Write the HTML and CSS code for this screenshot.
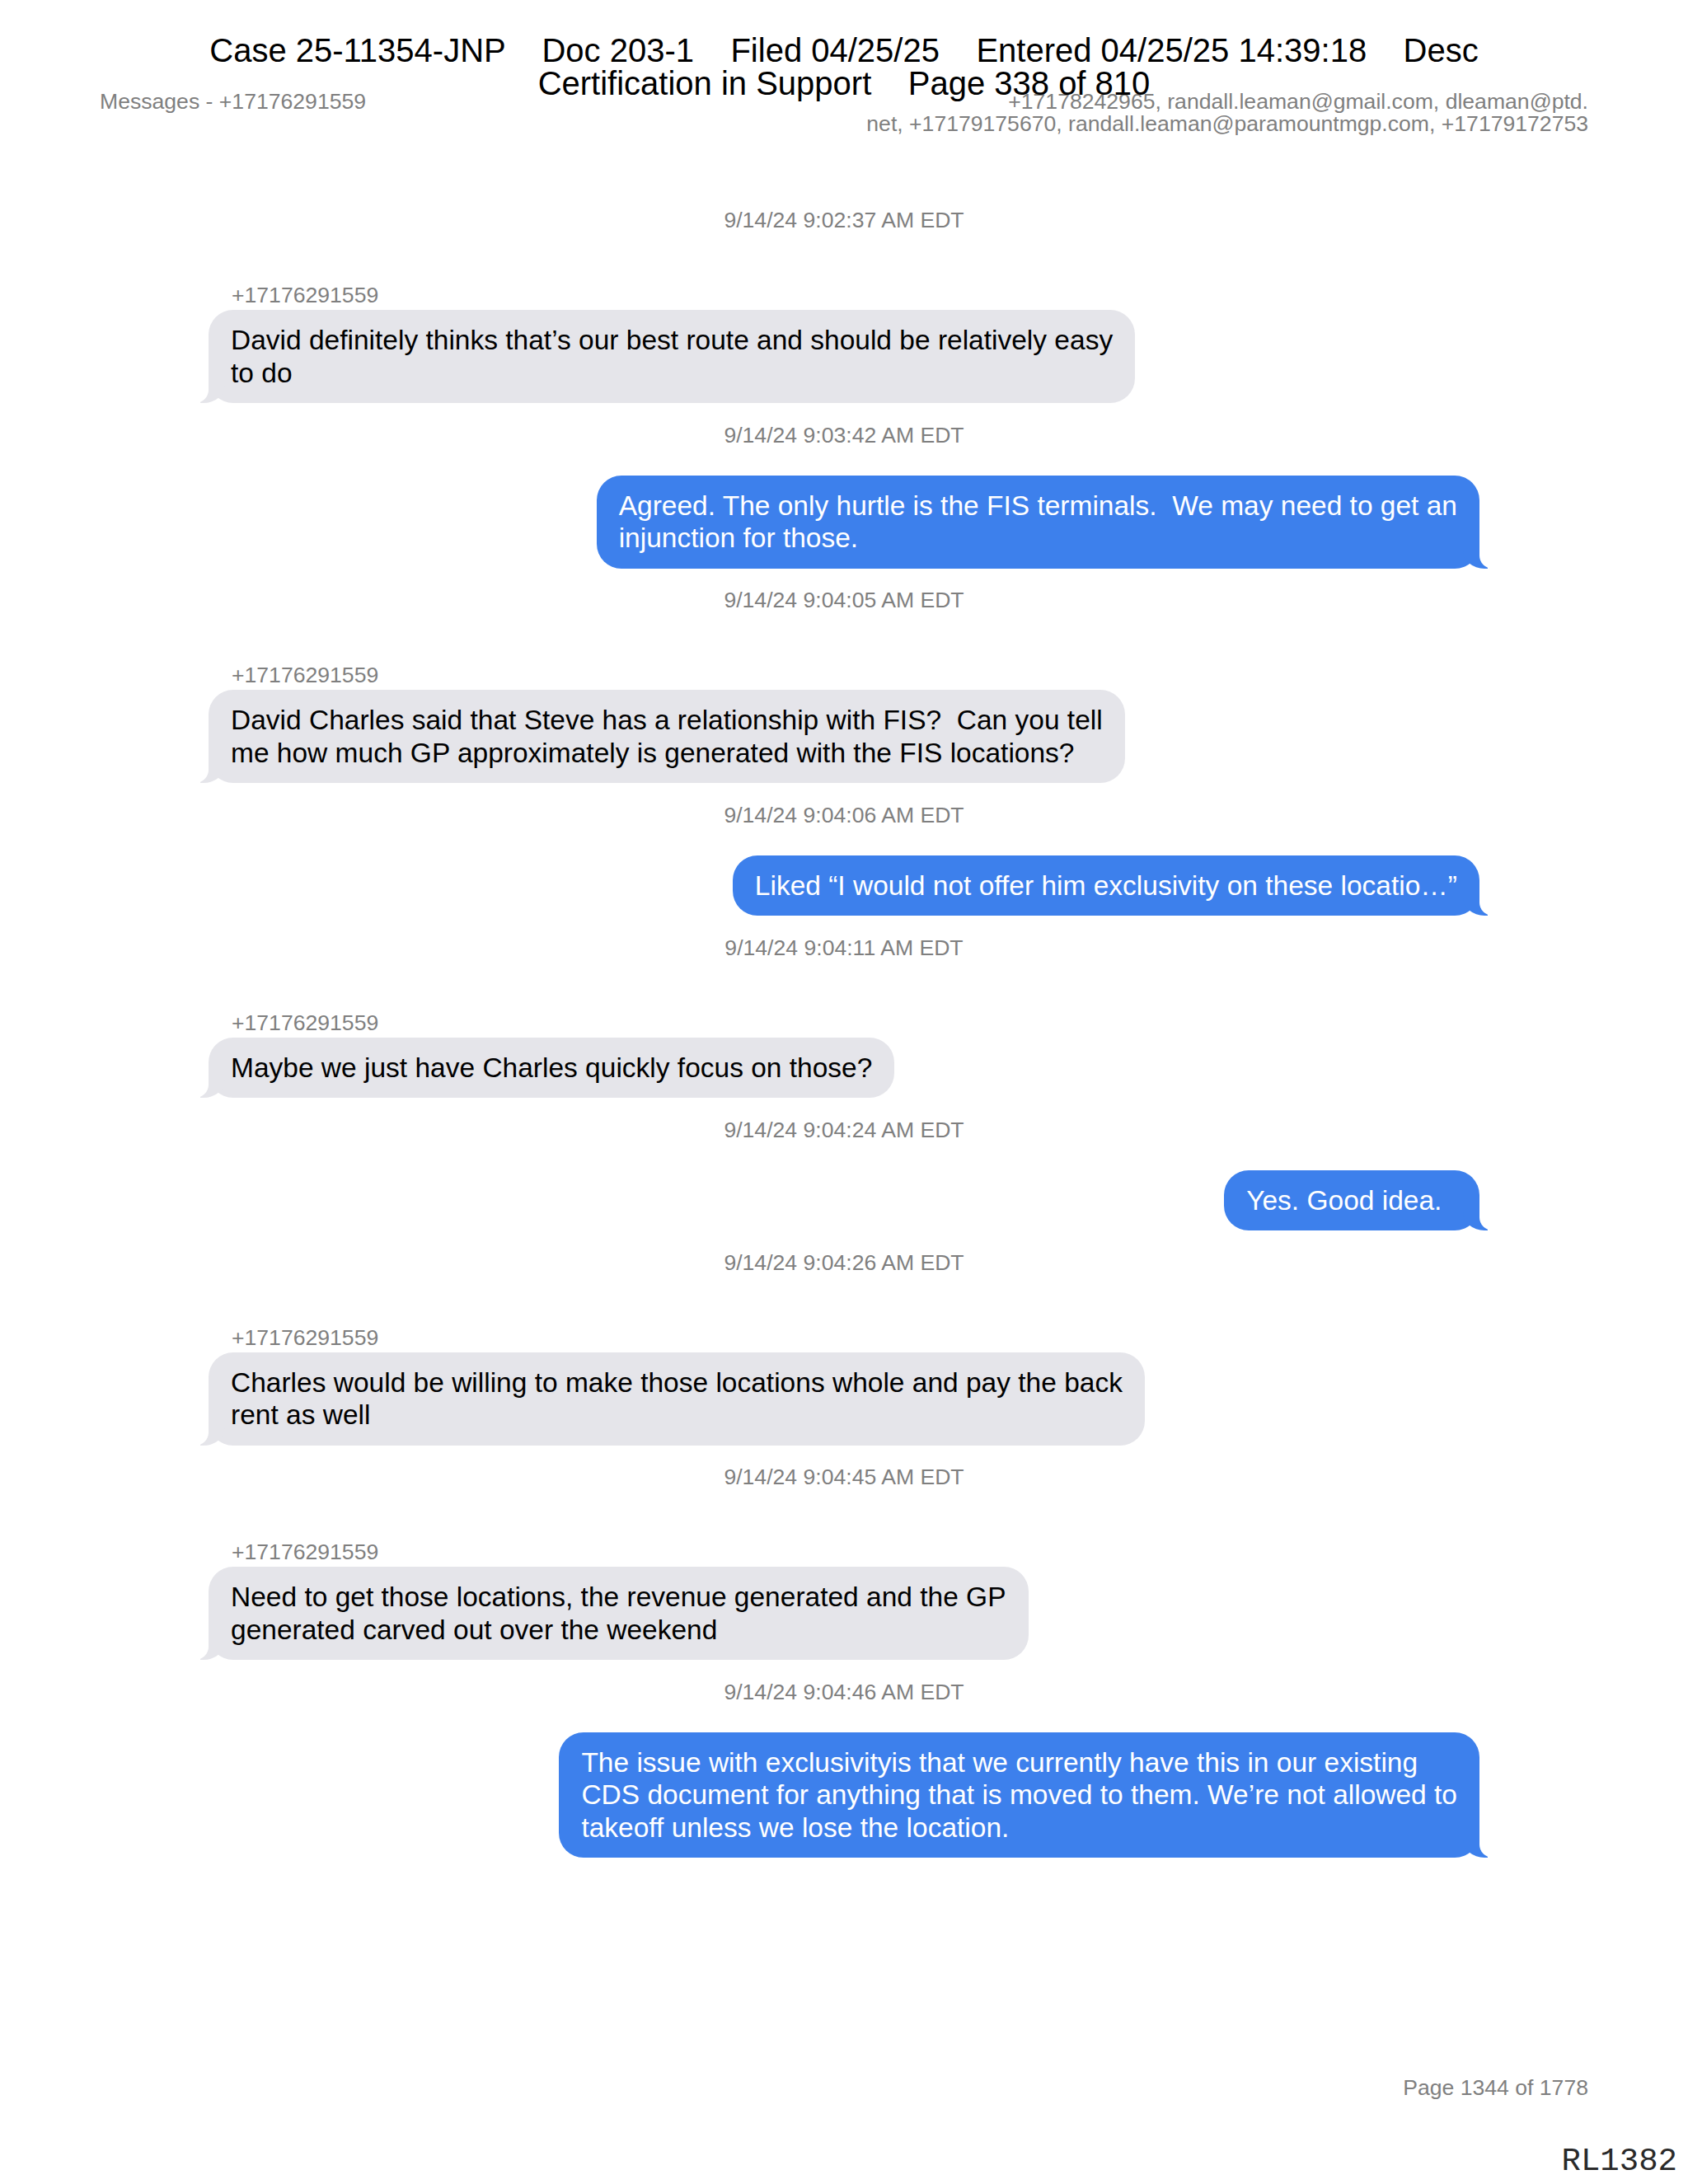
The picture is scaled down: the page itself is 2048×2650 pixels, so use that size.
FILE: index.html
```html
<!DOCTYPE html>
<html lang="en">
<head>
<meta charset="utf-8">
<title>Messages - +17176291559</title>
<link rel="stylesheet" href="styles.css">
</head>
<body>
<div class="page">
  <div class="court-stamp">
    <div class="court-line">Case 25-11354-JNP    Doc 203-1    Filed 04/25/25    Entered 04/25/25 14:39:18    Desc</div>
    <div class="court-line">Certification in Support    Page 338 of 810</div>
  </div>

  <header class="doc-header">
    <div class="doc-title">Messages - +17176291559</div>
    <div class="participants">
      <span class="line">+17178242965, randall.leaman@gmail.com, dleaman@ptd.</span>
      <span class="line">net, +17179175670, randall.leaman@paramountmgp.com, +17179172753</span>
    </div>
  </header>

  <main class="thread">
    <div class="stamp first">9/14/24 9:02:37 AM EDT</div>
    <div class="sender">+17176291559</div>
    <div class="bubble in">David definitely thinks that’s our best route and should be relatively easy<br>to do</div>

    <div class="stamp">9/14/24 9:03:42 AM EDT</div>
    <div class="bubble out">Agreed. The only hurtle is the FIS terminals.  We may need to get an<br>injunction for those.</div>

    <div class="stamp">9/14/24 9:04:05 AM EDT</div>
    <div class="sender">+17176291559</div>
    <div class="bubble in">David Charles said that Steve has a relationship with FIS?  Can you tell<br>me how much GP approximately is generated with the FIS locations?</div>

    <div class="stamp">9/14/24 9:04:06 AM EDT</div>
    <div class="bubble out">Liked “I would not offer him exclusivity on these locatio…”</div>

    <div class="stamp">9/14/24 9:04:11 AM EDT</div>
    <div class="sender">+17176291559</div>
    <div class="bubble in">Maybe we just have Charles quickly focus on those?</div>

    <div class="stamp">9/14/24 9:04:24 AM EDT</div>
    <div class="bubble out">Yes. Good idea.  </div>

    <div class="stamp">9/14/24 9:04:26 AM EDT</div>
    <div class="sender">+17176291559</div>
    <div class="bubble in">Charles would be willing to make those locations whole and pay the back<br>rent as well</div>

    <div class="stamp">9/14/24 9:04:45 AM EDT</div>
    <div class="sender">+17176291559</div>
    <div class="bubble in">Need to get those locations, the revenue generated and the GP<br>generated carved out over the weekend</div>

    <div class="stamp">9/14/24 9:04:46 AM EDT</div>
    <div class="bubble out">The issue with exclusivityis that we currently have this in our existing<br>CDS document for anything that is moved to them. We’re not allowed to<br>takeoff unless we lose the location.</div>
  </main>

  <footer class="doc-footer">Page 1344 of 1778</footer>
  <div class="bates">RL1382</div>
</div>
</body>
</html>
```

FILE: styles.css
```css
* {
  box-sizing: border-box;
}

html, body {
  margin: 0;
  padding: 0;
  background: #ffffff;
}

body {
  font-family: "Liberation Sans", Arial, Helvetica, sans-serif;
  color: #000000;
}

.page {
  position: relative;
  width: 2048px;
  min-height: 2650px;
  padding: 110px 121px 102px;
  display: flex;
  flex-direction: column;
}

/* Court filing stamp laid over the top of the page */
.court-stamp {
  position: absolute;
  top: 41px;
  left: 0;
  right: 0;
  text-align: center;
  font-size: 40px;
  line-height: 40px;
  color: #000000;
}

.court-line {
  white-space: pre;
}

/* Export header */
.doc-header {
  display: flex;
  justify-content: space-between;
  align-items: flex-start;
  font-size: 26.6px;
  line-height: 27px;
  color: #7f7f7f;
}

.doc-title {
  white-space: nowrap;
}

.participants {
  text-align: right;
}

.participants .line {
  display: block;
  white-space: nowrap;
}

/* Conversation */
.thread {
  display: flex;
  flex-direction: column;
  margin-top: 88px;
  padding: 0 132px;
}

.stamp {
  align-self: stretch;
  text-align: center;
  font-size: 26.6px;
  line-height: 30px;
  color: #7f7f7f;
  margin-top: 23.5px;
}

.stamp.first {
  margin-top: 0;
}

.sender {
  align-self: flex-start;
  margin-top: 61px;
  padding-left: 28px;
  font-size: 26.6px;
  line-height: 30px;
  color: #7f7f7f;
}

.bubble {
  position: relative;
  font-size: 33.5px;
  line-height: 39.5px;
  padding: 17px 27px;
  border-radius: 30px;
  white-space: pre;
}

.bubble.in {
  align-self: flex-start;
  margin-top: 3px;
  background: #e5e5ea;
  color: #000000;
}

.bubble.out {
  align-self: flex-end;
  margin-top: 34px;
  background: #3d80ec;
  color: #ffffff;
}

/* Bubble tails */
.bubble::before,
.bubble::after {
  content: "";
  position: absolute;
  bottom: 0;
  height: 32px;
}

.bubble.in::before {
  left: -10px;
  width: 30px;
  background: #e5e5ea;
  border-bottom-right-radius: 26px 22px;
}

.bubble.in::after {
  left: -36px;
  width: 36px;
  background: #ffffff;
  border-bottom-right-radius: 16px;
}

.bubble.out::before {
  right: -10px;
  width: 30px;
  background: #3d80ec;
  border-bottom-left-radius: 26px 22px;
}

.bubble.out::after {
  right: -36px;
  width: 36px;
  background: #ffffff;
  border-bottom-left-radius: 16px;
}

/* Footer */
.doc-footer {
  margin-top: auto;
  text-align: right;
  font-size: 26.6px;
  line-height: 30px;
  color: #7f7f7f;
}

.bates {
  position: absolute;
  right: 13px;
  bottom: 7px;
  font-family: "Liberation Mono", "Courier New", monospace;
  font-size: 39px;
  line-height: 40px;
  color: #2a2a2a;
}
```
